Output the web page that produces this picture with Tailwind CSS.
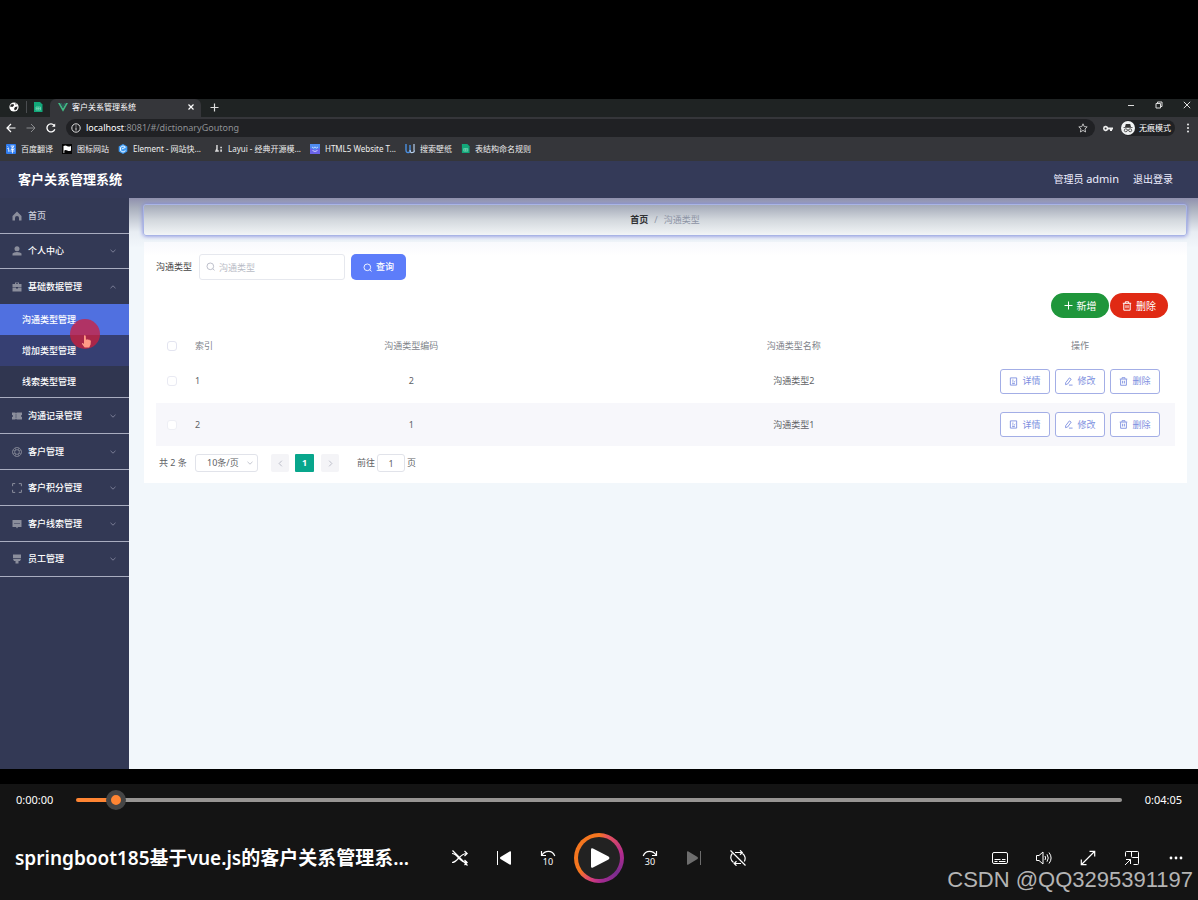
<!DOCTYPE html>
<html lang="zh-CN">
<head>
<meta charset="utf-8">
<meta name="viewport" content="width=device-width, initial-scale=1">
<title>客户关系管理系统</title>
<script src="https://cdn.jsdelivr.net/npm/@tailwindcss/browser@4"></script>
</head>
<body class="flex min-h-screen flex-col bg-black pt-[99px] font-['Noto_Sans','Noto_Sans_CJK_SC',sans-serif] text-[9px] leading-3">

<svg class="hidden" aria-hidden="true">
  <symbol id="down" viewBox="0 0 8 8"><path d="M1.500 2.800 4 5.200l2.500-2.400" fill="none" stroke="currentColor" stroke-width=".8"/></symbol>
  <symbol id="search" viewBox="0 0 10 10" fill="none" stroke="currentColor"><circle cx="4.800" cy="4.800" r="3.700"/><path d="m7.500 7.500 2 1.800"/></symbol>
  <symbol id="trash" viewBox="0 0 10 10" fill="none" stroke="currentColor"><path d="M.8 2.300h8.400M3.300 2V.8h3.400V2M1.800 2.500v6.700h6.400V2.500M4 4.200v3M6 4.200v3"/></symbol>
  <symbol id="doc" viewBox="0 0 10 10" fill="none" stroke="currentColor"><path d="M1.500 1h7v8h-7zM3.500 3.500h1.500M3.500 5.500h1.500M3.500 7.300h3"/><path d="m5.500 6 1.500-1.500"/></symbol>
  <symbol id="edit" viewBox="0 0 10 10" fill="none" stroke="currentColor"><path d="M6 1 8 2.400 4 7.800l-2.300.7.200-2.200zM5.500 9h4"/></symbol>
  <symbol id="sheet" viewBox="0 0 10 10"><path d="M1 0h6l2.500 2.500V10H1z" fill="#12a87a"/><path d="M3 5h4.500v3H3zM5.200 5v3M3 6.500h4.500" fill="none" stroke="#8fe0c4" stroke-width=".6"/></symbol>
</svg>

<div class="flex flex-1 flex-col bg-[#f2f7fb]">
  <!-- Browser chrome -->
  <div class="flex h-[18px] bg-[#1f2323] text-white">
    <div class="flex w-[50px] items-center pb-[2px] pl-[9px]">
      <svg class="size-[10px]" viewBox="0 0 10 10"><circle cx="5" cy="5" r="4.600" fill="#fff"/><path d="M2 2.500 4.500 2l.5 1.500L3.500 5 1 4.500zM6 5l2.500-.5L8 7 6 8.500 5 7zM6.500 1l1.500 1-1.500.8z" fill="#222"/></svg>
      <span class="ml-[7px] mr-[6px] h-3 w-px bg-[#4a4d50]"></span>
      <svg class="size-[10px]"><use href="#sheet"/></svg>
    </div>
    <div class="flex w-[151px] items-center rounded-t-md bg-[#35363a] pb-[2px] pl-[8px] pr-[6px]">
      <svg class="h-[9px] w-[10px]" viewBox="0 0 10 9"><path d="M0 0h2l3 5.200L8 0h2L5 8.800z" fill="#41b883"/><path d="M2 0h1.800L5 2.200 6.200 0H8L5 5.200z" fill="#2f5a58"/></svg>
      <span class="ml-[4px] flex-1 text-[8px]">客户关系管理系统</span>
      <button aria-label="关闭标签" class="size-[8px]"><svg viewBox="0 0 8 8"><path d="m1.500 1.500 5 5m0-5-5 5" stroke="#fff" stroke-width="1.200"/></svg></button>
    </div>
    <button aria-label="新标签页" class="mb-[2px] ml-[9px] size-[9px] self-center"><svg viewBox="0 0 9 9"><path d="M4.500.5v8m-4-4h8" stroke="#ddd" stroke-width="1.200"/></svg></button>
    <div class="ml-auto flex items-center gap-[20px] pb-[6px] pr-[7px]">
      <button aria-label="最小化" class="size-[8px]"><svg viewBox="0 0 8 8"><path d="M1 4.500h6" stroke="#ddd"/></svg></button>
      <button aria-label="还原" class="size-[8px]"><svg viewBox="0 0 8 8" fill="none" stroke="#ddd"><path d="M1 2.500h4.500V7H1zM2.500 2.500V1H7v4.500H5.500"/></svg></button>
      <button aria-label="关闭" class="size-[8px]"><svg viewBox="0 0 8 8"><path d="m.8.8 6.400 6.400m0-6.400L.8 7.200" stroke="#ddd"/></svg></button>
    </div>
  </div>

  <div class="flex h-[22px] items-center bg-[#35363a] pl-[6px] pr-[7px] text-white">
    <button aria-label="后退" class="size-[10px]"><svg viewBox="0 0 10 10" fill="none" stroke="#fff" stroke-width="1.200"><path d="M9.500 5H1m4-4L1 5l4 4"/></svg></button>
    <button aria-label="前进" class="ml-[10px] size-[10px]"><svg viewBox="0 0 10 10" fill="none" stroke="#8a8b8e"><path d="M.5 5H9M5 1l4 4-4 4"/></svg></button>
    <button aria-label="刷新" class="ml-[10px] size-[10px]"><svg viewBox="0 0 10 10" fill="none" stroke="#fff" stroke-width="1.300"><path d="M8.800 6.200A4 4 0 1 1 8 2.300"/><path d="M6 3.800h3.200V.6z" fill="#fff" stroke="none"/></svg></button>
    <div class="ml-[10px] flex h-[18px] flex-1 items-center rounded-full bg-[#202124] pl-[5px] pr-[7px]">
      <svg class="size-[10px]" viewBox="0 0 10 10" fill="none" stroke="#ddd"><circle cx="5" cy="5" r="4.200"/><path d="M5 4.500v3M5 2.500v1"/></svg>
      <span class="ml-[5px] flex-1 text-[#8f9195]"><span class="text-white">localhost</span>:8081/#/dictionaryGoutong</span>
      <button aria-label="收藏" class="size-[10px]"><svg viewBox="0 0 10 10" fill="none" stroke="#ccc" stroke-width=".9"><path d="m5 .8 1.200 2.800 3 .3L7 6l.6 3L5 7.400 2.400 9 3 6 .8 3.900l3-.3z"/></svg></button>
    </div>
    <svg class="ml-[8px] h-[7px] w-[10px]" viewBox="0 0 10 7"><path d="M0 3.500a2.700 2.700 0 0 1 5.200-1H10v2H9v1.500H7V4.500H5.200A2.700 2.700 0 0 1 0 3.500" fill="#eee"/><circle cx="2.600" cy="3.500" r="1" fill="#35363a"/></svg>
    <span class="ml-[8px] flex h-[16px] items-center gap-[4px] rounded-full bg-[#202124] pr-[4px] text-[8px]">
      <svg class="size-[14px]" viewBox="0 0 14 14"><circle cx="7" cy="7" r="7" fill="#f1f3f4"/><path d="M4.800 3h4.400l.8 3H4zM2.500 6.200h9v.8h-9z" fill="#333"/><g fill="none" stroke="#333" stroke-width=".8"><circle cx="4.800" cy="9.300" r="1.500"/><circle cx="9.200" cy="9.300" r="1.500"/><path d="M6.300 9h1.400"/></g></svg>
      无痕模式</span>
    <button aria-label="菜单" class="ml-[10px] h-[10px] w-[6px]"><svg viewBox="0 0 6 10" fill="#eee"><circle cx="3" cy="1.500" r="1"/><circle cx="3" cy="5" r="1"/><circle cx="3" cy="8.500" r="1"/></svg></button>
  </div>

  <nav class="flex h-[22px] items-center gap-[9px] bg-[#35363a] pb-[3px] pl-[6px] text-[8px] text-[#eee]">
    <a href="#" class="flex items-center gap-[5px]"><svg class="size-[10px]" viewBox="0 0 10 10"><rect width="10" height="10" rx="1" fill="#2f7df0"/><path d="M1.500 2.500l1 .8M1.300 4.500h1.400v3l1-.6M4.500 2h3.700L5 4.500M5.500 2.800l3 1.700M4.800 5.500h3.500M4.300 7h4.400M6.500 4.300v5" stroke="#fff" stroke-width=".8" fill="none"/></svg>百度翻译</a>
    <a href="#" class="flex items-center gap-[5px]"><svg class="size-[10px]" viewBox="0 0 10 10"><rect width="10" height="10" fill="#050505"/><path d="M1.500 2q2-1 3.500 0t4 0v4.500q-2 1-3.700 0t-3 0V9h-.8z" fill="#fff"/></svg>图标网站</a>
    <a href="#" class="flex items-center gap-[5px]"><svg class="size-[10px]" viewBox="0 0 10 10"><path d="m5 0 4.300 2.500v5L5 10 .7 7.500v-5z" fill="#3f9cf5"/><path d="M7.500 3.200 5 1.900 2.500 3.400v3.200L5 8.100l2.500-1.400M3.800 5l3.500-1.600" stroke="#fff" stroke-width=".9" fill="none"/></svg>Element - 网站快...</a>
    <a href="#" class="ml-[4px] flex items-center gap-[5px]"><svg class="size-[9px]" viewBox="0 0 10 10" fill="#ddd"><path d="M2.500 1h1.600v6h1.200v1.500H1L2.500 5zM7 3h1.800v1.600H7zM7 6.200h1.800v2.300H7z"/></svg>Layui - 经典开源模...</a>
    <a href="#" class="flex items-center gap-[5px]"><svg class="size-[10px]" viewBox="0 0 10 10"><rect width="10" height="10" fill="#6a62e8"/><path d="M0 0h10v4L5 6 0 4z" fill="#4f8cf0"/><path d="m2 3 1.500 1L5 3l1.500 1L8 3M2.500 6.500q2.500 2 5 0" stroke="#dfe6ff" stroke-width=".8" fill="none"/></svg>HTML5 Website T...</a>
    <a href="#" class="flex items-center gap-[5px]"><svg class="size-[10px]" viewBox="0 0 10 10" fill="none"><path d="M1 0v6q0 3 2.500 2.500T5 6V1" stroke="#4a8fe0" stroke-width="1.400"/><path d="M5 6q0 3 2.500 2.500T9 6V0" stroke="#b5cdea" stroke-width="1.200"/></svg>搜索壁纸</a>
    <a href="#" class="flex items-center gap-[5px]"><svg class="size-[9px]"><use href="#sheet"/></svg>表结构命名规则</a>
  </nav>

  <!-- Application header -->
  <header class="flex h-[37px] items-center bg-[#343a58] pb-px pl-[18px] pr-[25px] text-white">
    <h1 class="text-[13px] leading-4 font-bold">客户关系管理系统</h1>
    <span class="ml-auto text-[10px] text-[#eef]">管理员 <span class="text-[11px]">admin</span></span>
    <a href="#" class="ml-[14px] text-[10px] text-[#eef]">退出登录</a>
  </header>

  <div class="flex flex-1">
    <aside class="relative w-[129px] shrink-0 bg-[#333955] font-medium text-white">
      <a href="#" class="flex h-9 items-center border-b border-[#a9adc0] pl-[12px] text-[#c9cbd8]"><svg class="mr-[6px] size-[10px]" viewBox="0 0 10 10" fill="#8b8e9c"><path d="M5 .5 9.500 5v4.500H7V7a2 2 0 0 0-4 0v2.500H.5V5z"/></svg>首页</a>
      <button class="flex h-[35px] w-full items-center border-b border-[#a9adc0] pl-[12px] pr-[12px]"><svg class="mr-[6px] size-[10px]" viewBox="0 0 10 10" fill="#8b8e9c"><circle cx="5" cy="2.800" r="2.500"/><path d="M.5 9.500V7.500Q1.500 6 5 6t4.500 1.500v2z"/></svg>个人中心<svg class="ml-auto size-[8px] text-[#8b8ea5]"><use href="#down"/></svg></button>
      <button class="flex h-[35px] w-full items-center pl-[12px] pr-[12px]"><svg class="mr-[6px] size-[10px]" viewBox="0 0 10 10" fill="#8b8e9c"><path d="M3 2V.5h4V2h2.500v3h-9V2zM4 1.300V2h2v-.7zM.5 5.600H4v1h2v-1h3.500v3.900h-9z"/></svg>基础数据管理<svg class="ml-auto size-[8px] rotate-180 text-[#8b8ea5]"><use href="#down"/></svg></button>
      <div class="border-b border-[#a9adc0]">
        <a href="#" class="flex h-[31px] items-center bg-[#5070e0] pl-[22px]">沟通类型管理</a>
        <a href="#" class="flex h-[31px] items-center bg-[#363f72] pl-[22px]">增加类型管理</a>
        <a href="#" class="flex h-[31px] items-center bg-[#303650] pl-[22px]">线索类型管理</a>
      </div>
      <button class="flex h-9 w-full items-center border-b border-[#a9adc0] pl-[12px] pr-[12px]"><svg class="mr-[6px] size-[10px]" viewBox="0 0 10 10" fill="#8b8e9c"><path d="M0 1.500h3.300l.7 1 .7-1H10V4a1 1 0 0 0 0 2v2.500H4.700l-.7-1-.7 1H0V6a1 1 0 0 0 0-2z"/><path d="M4 3.500v1M4 5.500v1" stroke="#333955"/></svg>沟通记录管理<svg class="ml-auto size-[8px] text-[#8b8ea5]"><use href="#down"/></svg></button>
      <button class="flex h-9 w-full items-center border-b border-[#a9adc0] pl-[12px] pr-[12px]"><svg class="mr-[6px] size-[10px]" viewBox="0 0 10 10" fill="none" stroke="#8b8e9c" stroke-width=".8"><circle cx="5" cy="5" r="4.500"/><circle cx="5" cy="5" r="2.400"/><path d="M3.500.8v2.500M6.500.8v2.500M3.500 6.700v2.500M6.500 6.700v2.500M.8 3.500h2.500M.8 6.500h2.500M6.700 3.500h2.500M6.700 6.500h2.500" stroke-width=".5"/></svg>客户管理<svg class="ml-auto size-[8px] text-[#8b8ea5]"><use href="#down"/></svg></button>
      <button class="flex h-9 w-full items-center border-b border-[#a9adc0] pl-[12px] pr-[12px]"><svg class="mr-[6px] size-[10px]" viewBox="0 0 10 10" fill="none" stroke="#8b8e9c"><path d="M.6 3.200V.6h2.600M6.800.6h2.600v2.600M9.400 6.800v2.600H6.800M3.200 9.400H.6V6.800"/></svg>客户积分管理<svg class="ml-auto size-[8px] text-[#8b8ea5]"><use href="#down"/></svg></button>
      <button class="flex h-9 w-full items-center border-b border-[#a9adc0] pl-[12px] pr-[12px]"><svg class="mr-[6px] size-[10px]" viewBox="0 0 10 10" fill="#8b8e9c"><path d="M.5 1h9v7H6L5 9.500 4 8H.5z"/><path d="M2.500 4.500h1M4.500 4.500h1M6.500 4.500h1" stroke="#333955"/></svg>客户线索管理<svg class="ml-auto size-[8px] text-[#8b8ea5]"><use href="#down"/></svg></button>
      <button class="flex h-[35px] w-full items-center border-b border-[#a9adc0] pl-[12px] pr-[12px]"><svg class="mr-[6px] size-[10px]" viewBox="0 0 10 10" fill="#8b8e9c"><path d="M1 .5h8v3.800H1zM1 5h8l-1 2H6.500v2.500h-3V7H2z"/></svg>员工管理<svg class="ml-auto size-[8px] text-[#8b8ea5]"><use href="#down"/></svg></button>
      <!-- Pointer with click highlight -->
      <svg class="absolute left-[70px] top-[121px] size-[30px]" viewBox="0 0 30 30"><circle cx="15" cy="15" r="15" fill="#d01f3c" fill-opacity=".75"/><path d="M14 16.500q1-.8 1.700.3l.3 4 1.300-.6.900.6 1-.2.800.8.9.2-.3 4-1.400 3h-4.600l-2.600-3.500q-.3-1.200.7-1l1.300.8z" fill="#ff9a86"/></svg>
    </aside>

    <main class="flex-1 bg-[linear-gradient(to_bottom,#8f90ae,#a9afbd_10px,#e8edf3_34px,#f2f7fb_50px)] pl-[14px] pr-[11px] pt-[6px]">
      <nav aria-label="面包屑" class="flex h-8 items-center justify-center gap-[6px] rounded-[3px] border border-[#a9b4e6] bg-[linear-gradient(to_bottom,#a3a9b8,#d3d8dd_50%,#f2f5f7)] shadow-[0_0_4px_#7d85dd]">
        <a href="#" class="font-bold text-[#303133]">首页</a><span class="text-[#8d94a5]">/</span><span class="text-[#8d94a5]">沟通类型</span>
      </nav>

      <section class="mt-[6px] ml-[1px] bg-[linear-gradient(to_bottom,#f8f9fd,#fff_14px)] px-[12px] pb-[11px] pt-[12px] text-[#606266]">
        <form class="flex items-center">
          <label for="kind" class="text-[#444]">沟通类型</label>
          <div class="relative ml-[7px]">
            <input id="kind" placeholder="沟通类型" class="h-[26px] w-[146px] rounded-[3px] border border-[#e6e8ee] bg-white pl-[19px] outline-none placeholder:text-[#b9bcc6]">
            <svg class="absolute left-[7px] top-[8px] size-[9px] text-[#b5b8c4]"><use href="#search"/></svg>
          </div>
          <button type="button" class="ml-[6px] flex h-[26px] w-[55px] items-center justify-center gap-[4px] rounded-[5px] bg-[#5d7dfa] font-medium text-white"><svg class="size-[9px]"><use href="#search"/></svg>查询</button>
        </form>
        <div class="mt-[13px] flex justify-end gap-px pr-[7px] text-[10px] text-white">
          <button class="flex h-[25px] w-[58px] items-center justify-center gap-[4px] rounded-full bg-[#1f963b]"><svg class="size-[9px]" viewBox="0 0 9 9"><path d="M4.500.5v8m-4-4h8" stroke="#fff"/></svg>新增</button>
          <button class="flex h-[25px] w-[58px] items-center justify-center gap-[4px] rounded-full bg-[#e02a14]"><svg class="size-[10px]"><use href="#trash"/></svg>删除</button>
        </div>

        <table class="mt-[15px] w-full table-fixed text-center">
          <colgroup><col class="w-[32px]"><col class="w-[32px]"><col><col><col class="w-[190px]"></colgroup>
          <thead>
            <tr class="h-[26px] text-[#80838a]">
              <th><input type="checkbox" aria-label="全选" class="mx-auto block size-[10px] appearance-none rounded-[3px] border border-[#e3e4f0] bg-white"></th>
              <th class="pl-[7px] text-left font-normal whitespace-nowrap">索引</th><th class="font-normal">沟通类型编码</th><th class="font-normal">沟通类型名称</th><th class="font-normal">操作</th>
            </tr>
          </thead>
          <tbody>
            <tr class="h-[44px]">
              <td><input type="checkbox" aria-label="选择第1行" class="mx-auto block size-[10px] appearance-none rounded-[3px] border border-[#e9eaf3] bg-white"></td>
              <td class="pl-[7px] text-left">1</td><td>2</td><td>沟通类型2</td>
              <td><div class="flex justify-center gap-[5px] text-[#7d8fe0]">
                <button class="flex h-[25px] w-[50px] items-center justify-center gap-[4px] rounded-[3px] border border-[#a3aee6] bg-white"><svg class="size-[9px]"><use href="#doc"/></svg>详情</button>
                <button class="flex h-[25px] w-[50px] items-center justify-center gap-[4px] rounded-[3px] border border-[#a3aee6] bg-white"><svg class="size-[9px]"><use href="#edit"/></svg>修改</button>
                <button class="flex h-[25px] w-[50px] items-center justify-center gap-[4px] rounded-[3px] border border-[#a3aee6] bg-white"><svg class="size-[9px]"><use href="#trash"/></svg>删除</button>
              </div></td>
            </tr>
            <tr class="h-[43px] bg-[#f7f7fb]">
              <td><input type="checkbox" aria-label="选择第2行" class="mx-auto block size-[10px] appearance-none rounded-[3px] border border-[#eeeff5] bg-white"></td>
              <td class="pl-[7px] text-left">2</td><td>1</td><td>沟通类型1</td>
              <td><div class="flex justify-center gap-[5px] text-[#7d8fe0]">
                <button class="flex h-[25px] w-[50px] items-center justify-center gap-[4px] rounded-[3px] border border-[#a3aee6] bg-white"><svg class="size-[9px]"><use href="#doc"/></svg>详情</button>
                <button class="flex h-[25px] w-[50px] items-center justify-center gap-[4px] rounded-[3px] border border-[#a3aee6] bg-white"><svg class="size-[9px]"><use href="#edit"/></svg>修改</button>
                <button class="flex h-[25px] w-[50px] items-center justify-center gap-[4px] rounded-[3px] border border-[#a3aee6] bg-white"><svg class="size-[9px]"><use href="#trash"/></svg>删除</button>
              </div></td>
            </tr>
          </tbody>
        </table>

        <div class="mt-[8px] flex h-[18px] items-center pl-[3px]">
          <span class="w-[36px]">共 2 条</span>
          <div class="relative">
            <select aria-label="每页条数" class="h-[18px] w-[63px] appearance-none rounded-[3px] border border-[#e1e3ea] bg-white pl-[11px] leading-4"><option>10条/页</option></select>
            <svg class="pointer-events-none absolute right-[4px] top-[5px] size-[8px] text-[#b5b8c4]"><use href="#down"/></svg>
          </div>
          <button aria-label="上一页" class="ml-[13px] flex h-[18px] w-[18px] items-center justify-center rounded-[2px] bg-[#f4f4f7] text-[#b5b8c4]"><svg class="size-[9px] rotate-90"><use href="#down"/></svg></button>
          <button class="ml-[6px] h-[18px] w-[19px] rounded-[1px] bg-[#08a68c] font-bold text-white">1</button>
          <button aria-label="下一页" class="ml-[7px] flex h-[18px] w-[18px] items-center justify-center rounded-[2px] bg-[#f4f4f7] text-[#b5b8c4]"><svg class="size-[9px] -rotate-90"><use href="#down"/></svg></button>
          <label for="page" class="ml-[18px]">前往</label>
          <input id="page" value="1" class="mx-[2px] h-[18px] w-[28px] rounded-[3px] border border-[#e1e3ea] bg-white text-center outline-none">
          <span>页</span>
        </div>
      </section>
    </main>
  </div>
</div>

<!-- Media player -->
<footer class="relative mt-[15px] bg-[#141414] pb-[17px] text-white">
  <div class="flex h-8 items-center gap-[23px] px-4 text-[11px] leading-4">
    <span>0:00:00</span>
    <input type="range" min="0" max="1000" value="29" aria-label="播放进度" class="h-5 min-w-0 flex-1 appearance-none bg-transparent [&::-webkit-slider-runnable-track]:h-1 [&::-webkit-slider-runnable-track]:rounded-full [&::-webkit-slider-runnable-track]:bg-[linear-gradient(to_right,#ff8533_40px,#979593_40px)] [&::-webkit-slider-thumb]:-mt-2 [&::-webkit-slider-thumb]:size-5 [&::-webkit-slider-thumb]:appearance-none [&::-webkit-slider-thumb]:rounded-full [&::-webkit-slider-thumb]:border-[5px] [&::-webkit-slider-thumb]:border-[#454545] [&::-webkit-slider-thumb]:bg-[#ff8533]">
    <span>0:04:05</span>
  </div>
  <div class="mt-[17px] grid grid-cols-[1fr_auto_1fr] items-center">
    <h2 class="truncate pl-[15px] text-[19px] leading-7 font-semibold">springboot185基于vue.js的客户关系管理系...</h2>
    <div class="flex items-center">
      <button aria-label="随机播放" class="flex w-11 justify-center"><svg class="size-4" viewBox="0 0 16 16" fill="none" stroke="#fff" stroke-width="1.200"><path d="M0 12.500c6 0 7-9 15-9M0 3.500c6 0 7 9 15 9M12.500 1l2.700 2.500L12.500 6M12.500 10l2.700 2.500-2.700 2.500M.5.5l15 15"/></svg></button>
      <button aria-label="上一个" class="flex w-11 justify-center"><svg class="size-4" viewBox="0 0 16 16" fill="#fff"><path d="M1 1h1v14H1zM14 1.200a.8.8 0 0 1 1 .8v12a.8.8 0 0 1-1 .8L4.500 9q-1-1 0-2z"/></svg></button>
      <button aria-label="后退10秒" class="flex w-11 justify-center"><svg class="h-5 w-4 overflow-visible" viewBox="0 0 16 20"><path d="M1.500 3v4.500H6M1.800 7.300Q4 3.300 8.500 3.300T14.800 8" fill="none" stroke="#fff" stroke-width="1.200"/><text x="8" y="17" text-anchor="middle" font-size="9" font-family="Noto Sans" fill="#fff">10</text></svg></button>
      <button aria-label="播放" class="flex w-[58px] justify-center"><span class="flex size-[50px] items-center justify-center rounded-full bg-[conic-gradient(from_20deg,#e8555a,#b02a8e_60deg,#7a2d8e_110deg,#a52a90_155deg,#cc3a80_175deg,#e8555a_195deg,#f5761f_215deg,#f5761f_340deg,#e8555a)]"><span class="flex size-[42px] items-center justify-center rounded-full bg-[#222]"><svg class="ml-[2px] size-5" viewBox="0 0 20 20" fill="#fff"><path d="M1 1.500Q1-.3 3 .4l15.500 8q1.800 1.600 0 3.200L3 19.600Q1 20.300 1 18.500z"/></svg></span></span></button>
      <button aria-label="前进30秒" class="flex w-11 justify-center"><svg class="h-5 w-4 overflow-visible" viewBox="0 0 16 20"><path d="M14.500 3v4.500H10M14.200 7.300Q12 3.300 7.500 3.300T1.200 8" fill="none" stroke="#fff" stroke-width="1.200"/><text x="8" y="17" text-anchor="middle" font-size="9" font-family="Noto Sans" fill="#fff">30</text></svg></button>
      <button aria-label="下一个" disabled class="flex w-11 justify-center"><svg class="size-4" viewBox="0 0 16 16" fill="#6d6d6d"><path d="M14 1h1v14h-1zM2 1.200a.8.8 0 0 0-1 .8v12a.8.8 0 0 0 1 .8L11.500 9q1-1 0-2z"/></svg></button>
      <button aria-label="循环关闭" class="flex w-11 justify-center"><svg class="size-4" viewBox="0 0 16 16" fill="none" stroke="#fff" stroke-width="1.200"><path d="M5 2.500h7M10 .3l2.300 2.200L10 4.700M12.500 3.500a6 6 0 0 1 1.800 8M11 13.500H4M6.500 11.300l-2.300 2.200 2.300 2.200M3.500 12.500a6 6 0 0 1-1.200-9M.5.5l15 15"/></svg></button>
    </div>
    <div class="flex items-center justify-end">
      <button aria-label="字幕" class="flex w-11 justify-center"><svg class="size-4" viewBox="0 0 16 16" fill="none" stroke="#fff"><rect x=".5" y="2.500" width="15" height="11" rx="1.500"/><path d="M2.500 9.500h6M10 9.500h3.500M2.500 11.500h3M7 11.500h6.500"/></svg></button>
      <button aria-label="音量" class="flex w-11 justify-center"><svg class="size-4" viewBox="0 0 16 16" fill="none" stroke="#fff"><path d="M.5 5.500H3L7 2v12L3 10.500H.5zM9 6q1.300 2 0 4M11 4.300q2.500 3.700 0 7.400M13 2.500q4.200 5.500 0 11"/></svg></button>
      <button aria-label="全屏" class="flex w-11 justify-center"><svg class="size-4" viewBox="0 0 16 16" fill="none" stroke="#fff" stroke-width="1.200"><path d="M1.500 14.500l13-13M9.500 1.300h5.200v5.200M1.300 9.500v5.200h5.200"/></svg></button>
      <button aria-label="迷你播放器" class="flex w-11 justify-center"><svg class="size-4" viewBox="0 0 16 16" fill="none" stroke="#fff"><path d="M1.500 6.500v-4q0-1 1-1h11q1 0 1 1v11q0 1-1 1h-4M7.500 1.500v5q0 1 1 1h6M2 9.500h4.500V14M6.500 9.500l-5.500 5.500"/></svg></button>
      <button aria-label="更多" class="flex w-11 justify-center"><svg class="size-4" viewBox="0 0 16 16" fill="#fff"><circle cx="3" cy="8" r="1.400"/><circle cx="8" cy="8" r="1.400"/><circle cx="13" cy="8" r="1.400"/></svg></button>
    </div>
  </div>
  <span class="absolute bottom-[8px] right-[5px] font-['Liberation_Sans',sans-serif] text-[22px] leading-6 text-[#b4b4b4]">CSDN @QQ3295391197</span>
</footer>
</body>
</html>
